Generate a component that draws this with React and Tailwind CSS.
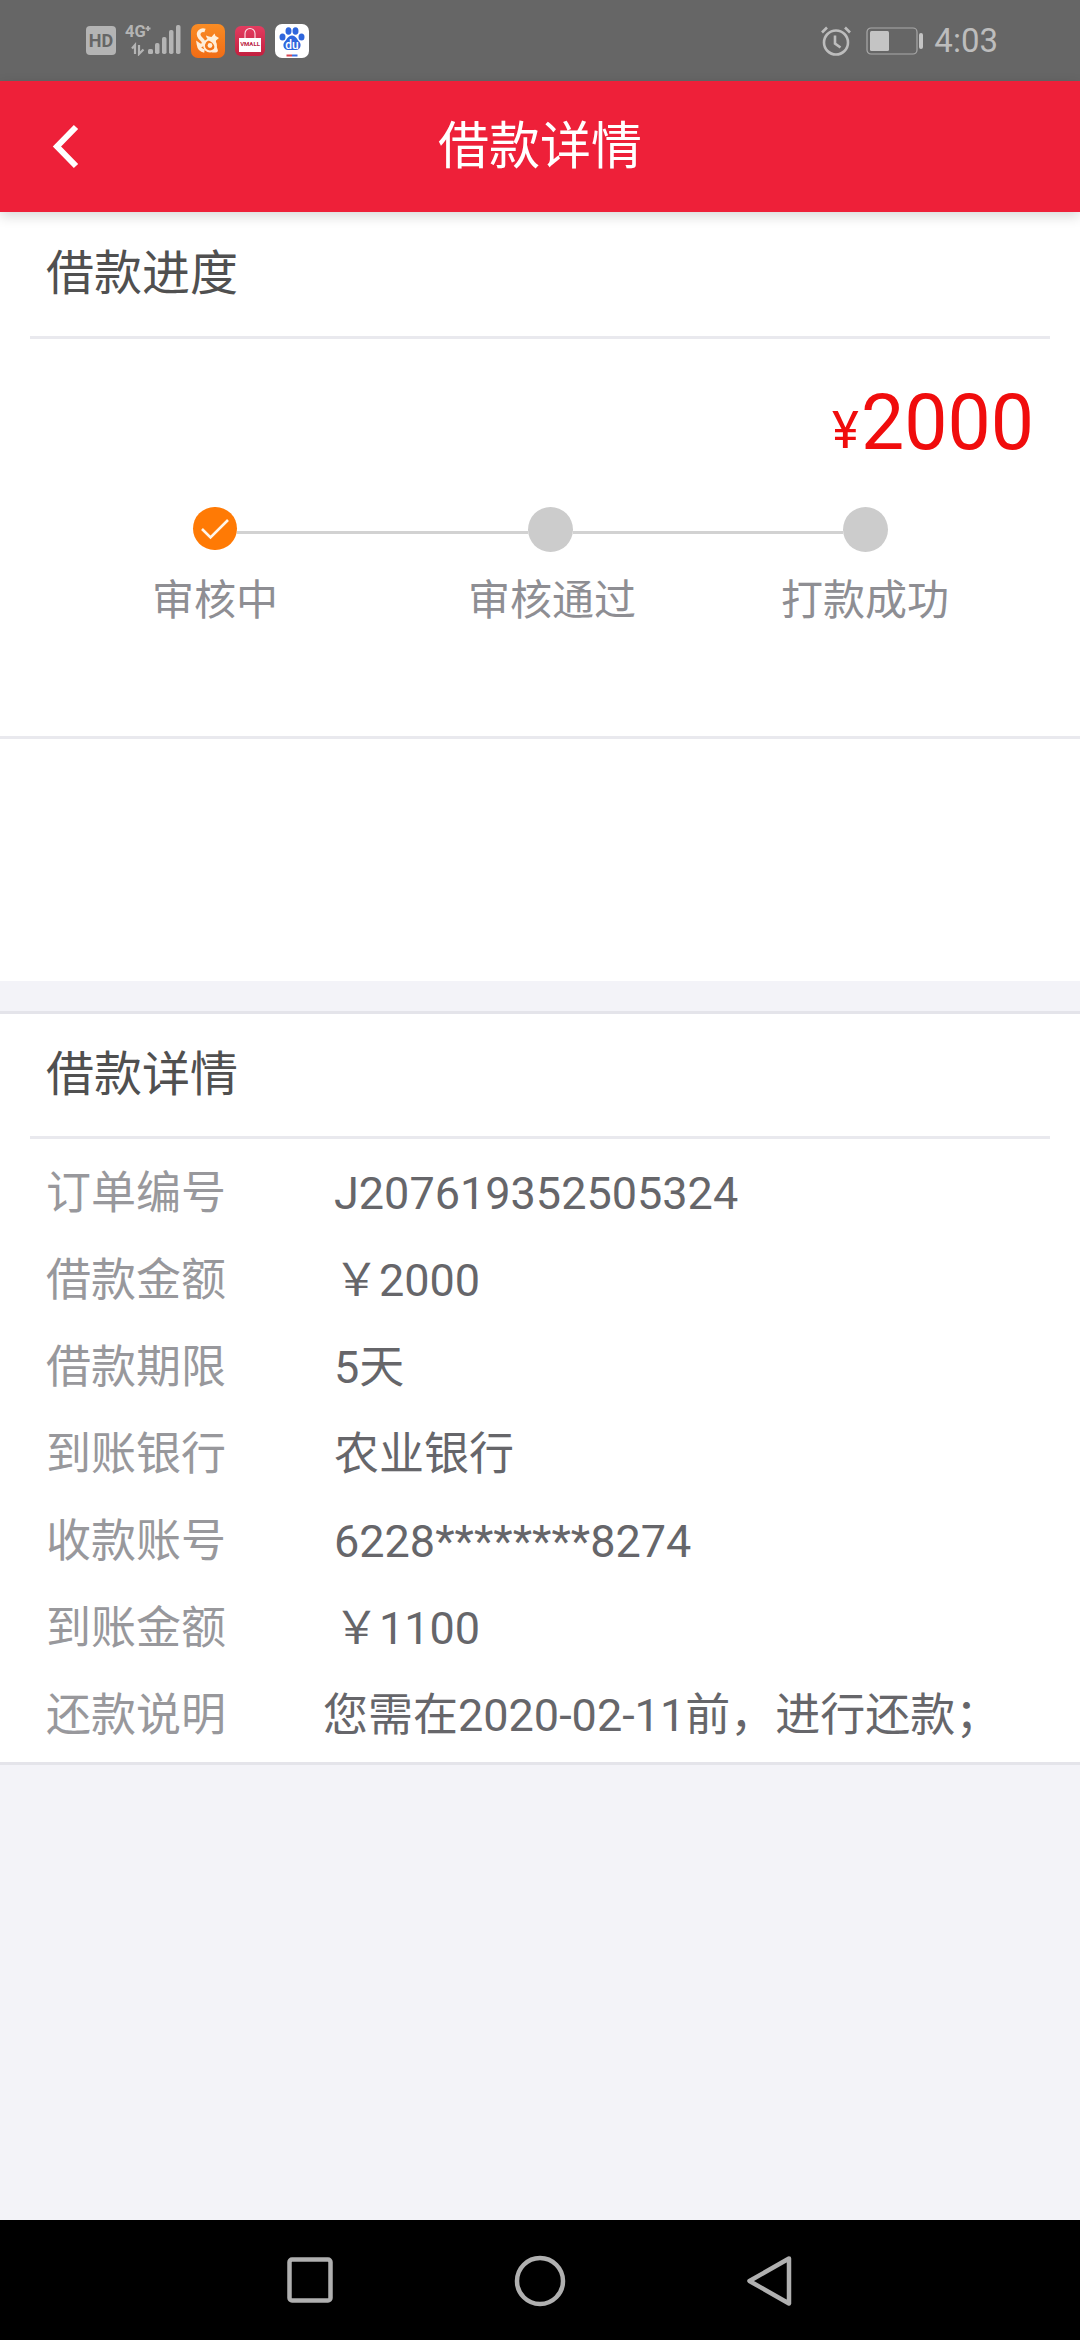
import React from "react";

const FONT = "font-['Roboto','Noto_Sans_CJK_SC',sans-serif]";

function Signal() {
  return (
    <svg width="56" height="36" viewBox="0 -4 56 36" className="mb-[5px] ml-[9px]">
      <text x="0" y="13" fontFamily="Roboto, sans-serif" fontWeight="700" fontSize="16.5" fill="#b4b4b4">4G</text>
      <path d="M20.5 4.5h5M23 2v5" stroke="#b4b4b4" strokeWidth="1.8" />
      <path d="M10 30V21l-3 3.5M14 21v9l4.5-4.5" stroke="#b4b4b4" strokeWidth="2.2" fill="none" />
      <rect x="23" y="25" width="5" height="5" rx="1.5" fill="#b4b4b4" />
      <rect x="30" y="19" width="4.5" height="11" rx="1.8" fill="#b4b4b4" />
      <rect x="37" y="13" width="4.5" height="17" rx="1.8" fill="#b4b4b4" />
      <rect x="44" y="6" width="4.5" height="24" rx="1.8" fill="#b4b4b4" />
      <rect x="51" y="1" width="4.5" height="29" rx="1.8" fill="#b4b4b4" />
    </svg>
  );
}

function UcIcon() {
  return (
    <svg width="34" height="34" viewBox="0 0 34 34" className="ml-[10px]">
      <defs>
        <linearGradient id="uc" x1="0" y1="0" x2="0" y2="1">
          <stop offset="0" stopColor="#f98c24" />
          <stop offset="1" stopColor="#f16c15" />
        </linearGradient>
      </defs>
      <rect width="34" height="34" rx="7" fill="url(#uc)" />
      <path d="M14 6.5c-4-1.500-7.500 2-6 5.500 1.500 3.500 5.500 4.500 4.500 7.500-.7 2-3 2.500-5 1 .5 3.500 3 6 6 6.500" fill="none" stroke="#ffeed9" strokeWidth="3.6" />
      <circle cx="19" cy="21.500" r="6" fill="none" stroke="#ffeed9" strokeWidth="1.800" />
      <circle cx="19" cy="21.500" r="2.400" fill="#ffeed9" />
      <path d="M15 11.500c2 .5 4 1.500 5.500 1.500l3-3.500 1 2.500 3.500 2-3 2.500c-.5 3 .5 6 1.500 8.500 1 2 0 3.500-2 3.500h-4c3.500-2 4-6.500 1-9.500-2-2-5-2.500-6.500-7z" fill="#ffeed9" />
    </svg>
  );
}

function MallIcon() {
  return (
    <svg width="30" height="30" viewBox="0 0 30 30" className="ml-[10px]">
      <defs>
        <linearGradient id="vm" x1="0" y1="0" x2="0" y2="1">
          <stop offset="0" stopColor="#e43c60" />
          <stop offset="1" stopColor="#c2203f" />
        </linearGradient>
      </defs>
      <rect width="30" height="30" rx="6" fill="url(#vm)" />
      <path d="M10 12V7.500a5 5 0 0 1 10 0V12" fill="none" stroke="#fbe3e8" strokeWidth="1.100" />
      <rect x="4" y="12" width="22" height="14" fill="#ffffff" />
      <text x="15" y="19.500" textAnchor="middle" fontFamily="Roboto, sans-serif" fontWeight="700" fontSize="6" fill="#b9233f">VMALL</text>
    </svg>
  );
}

function BaiduIcon() {
  return (
    <svg width="34" height="34" viewBox="0 0 34 34" className="ml-[10px]">
      <rect width="34" height="34" rx="7" fill="#ffffff" />
      <ellipse cx="7.500" cy="13" rx="3" ry="3.500" fill="#2f66dd" />
      <ellipse cx="13.500" cy="7" rx="3" ry="3.800" fill="#2f66dd" />
      <ellipse cx="20.500" cy="7" rx="3" ry="3.800" fill="#2f66dd" />
      <ellipse cx="26.500" cy="13" rx="3" ry="3.500" fill="#2f66dd" />
      <path d="M17 11.500c4 0 5 4 7.500 6.500 2.500 3 .5 8-3.500 8h-8c-4 0-6-5-3.500-8 2.500-2.500 3.500-6.500 7.500-6.500z" fill="#2f66dd" />
      <text x="17" y="24.500" textAnchor="middle" fontFamily="Roboto, sans-serif" fontWeight="500" fontSize="12" fill="#ffffff">du</text>
      <rect x="11.500" y="30.500" width="5.500" height="2" fill="#d8434e" />
      <rect x="17" y="30.500" width="5.500" height="2" fill="#3b6fe0" />
    </svg>
  );
}

function Alarm() {
  return (
    <svg width="32" height="32" viewBox="0 0 32 32">
      <circle cx="16" cy="17.500" r="12" fill="none" stroke="#bdbdbd" strokeWidth="2.600" />
      <path d="M15 10.500v8l5.500 4" fill="none" stroke="#bdbdbd" strokeWidth="2.600" />
      <path d="M2 7.500 7 2.500M30 7.500l-5-5" stroke="#bdbdbd" strokeWidth="2.600" />
    </svg>
  );
}

function Battery() {
  return (
    <svg width="58" height="28" viewBox="0 0 58 28" className="ml-[14px]">
      <rect x="1" y="1" width="50" height="26" rx="4" fill="none" stroke="#a9a9a9" strokeWidth="1.200" />
      <rect x="4" y="4" width="19" height="20" rx="1.500" fill="#c4c4c4" />
      <rect x="53" y="6" width="4" height="16" rx="2" fill="#c4c4c4" />
    </svg>
  );
}

function StatusBar() {
  return (
    <div className="flex h-[81px] shrink-0 items-center bg-[#666666] pl-[86px] pr-[82px]">
      <div className="flex h-[29px] w-[30px] items-center justify-center rounded-[4px] bg-[#b4b4b4]">
        <span className="font-['Roboto',sans-serif] text-[18px] font-bold leading-none text-[#666666]">HD</span>
      </div>
      <Signal />
      <UcIcon />
      <MallIcon />
      <BaiduIcon />
      <div className="flex-1" />
      <Alarm />
      <Battery />
      <span className="ml-[10px] font-['Roboto',sans-serif] text-[33px] leading-none text-[#bdbdbd]">4:03</span>
    </div>
  );
}

function Header() {
  return (
    <div className="relative z-10 flex h-[131px] shrink-0 items-center justify-center bg-[#ee2039] shadow-[0_4px_12px_rgba(0,0,0,0.16)]">
      <svg width="32" height="48" viewBox="0 0 32 48" className="absolute left-[50px] top-[42px]">
        <path d="M26 4 7 23.500 26 43" fill="none" stroke="#ffffff" strokeWidth="6" />
      </svg>
      <h1 className="text-[51px] font-normal leading-none text-white">借款详情</h1>
    </div>
  );
}

function SectionTitle({ children, h }) {
  return (
    <div className={`mx-[30px] flex items-center border-b-[3px] border-[#e9e9ee] pl-[16px] ${h}`}>
      <h2 className="text-[48px] font-normal leading-none text-[#505050]">{children}</h2>
    </div>
  );
}

function Dot({ active }) {
  if (active) {
    return (
      <div className="flex h-[43px] w-[44px] shrink-0 items-center justify-center rounded-full bg-[#ff7a05]">
        <svg width="30" height="22" viewBox="0 0 30 22">
          <path d="M2 11l8.500 8.500L28 2" fill="none" stroke="#fff6ea" strokeWidth="2.600" />
        </svg>
      </div>
    );
  }
  return <div className="h-[45px] w-[45px] shrink-0 rounded-full bg-[#cccccc]" />;
}

function Progress() {
  return (
    <section className="h-[527px] shrink-0 border-b-[3px] border-[#e9e9ee] bg-white">
      <SectionTitle h="h-[127px]">借款进度</SectionTitle>
      <div className="mt-[27px] flex h-[100px] items-center justify-end pr-[46px] pt-[14px] text-[#f00d0d]">
        <span className="mr-[2px] mt-[14px] text-[51px] leading-none">¥</span>
        <span className="text-[77px] leading-none">2000</span>
      </div>
      <div className="mt-[41px] flex items-start pl-[193px]">
        <Dot active />
        <div className="mt-[24px] h-[3px] w-[291px] shrink-0 bg-[#d2d2d2]" />
        <Dot />
        <div className="mt-[24px] h-[3px] w-[270px] shrink-0 bg-[#d2d2d2]" />
        <Dot />
      </div>
      <div className="mt-[24px] flex text-center text-[42px] leading-[50px] text-[#8e8e93]">
        <div className="ml-[115px] w-[200px]">审核中</div>
        <div className="ml-[137px] w-[200px]">审核通过</div>
        <div className="ml-[113px] w-[200px]">打款成功</div>
      </div>
    </section>
  );
}

const rows = [
  ["订单编号", "J207619352505324", "w-[288px]"],
  ["借款金额", "￥2000", "w-[288px]"],
  ["借款期限", "5天", "w-[288px]"],
  ["到账银行", "农业银行", "w-[288px]"],
  ["收款账号", "6228********8274", "w-[288px]"],
  ["到账金额", "￥1100", "w-[288px]"],
  ["还款说明", "您需在2020-02-11前，进行还款；", "w-[277px]"],
];

function Details() {
  return (
    <section className="mt-[30px] shrink-0 border-y-[3px] border-[#e4e4ea] bg-white">
      <SectionTitle h="h-[125px]">借款详情</SectionTitle>
      <div className="pb-[3px] pt-[11px]">
        {rows.map(([label, value, w]) => (
          <div key={label} className="flex h-[87px] items-center pl-[46px] text-[45px] leading-none">
            <span className={`${w} shrink-0 text-[#98989c]`}>{label}</span>
            <span className="whitespace-nowrap text-[#66666a]">{value}</span>
          </div>
        ))}
      </div>
    </section>
  );
}

function NavBar() {
  return (
    <div className="flex h-[120px] shrink-0 items-start bg-black pl-[287px] pt-[35px]">
      <svg width="46" height="50" viewBox="0 0 46 50">
        <rect x="2.500" y="4.500" width="41" height="41" rx="2.500" fill="none" stroke="#b0b0b0" strokeWidth="4.500" />
      </svg>
      <svg width="52" height="52" viewBox="0 0 52 52" className="ml-[181px]">
        <circle cx="26" cy="26" r="23" fill="none" stroke="#b0b0b0" strokeWidth="4.500" />
      </svg>
      <svg width="48" height="52" viewBox="0 0 48 52" className="ml-[180px]">
        <path d="M43 3.500 3.500 26 43 48.500Z" fill="none" stroke="#b0b0b0" strokeWidth="4.500" strokeLinejoin="round" />
      </svg>
    </div>
  );
}

export default function App() {
  return (
    <div className={`flex h-[2340px] w-[1080px] flex-col overflow-hidden bg-[#f3f3f8] ${FONT}`}>
      <StatusBar />
      <Header />
      <Progress />
      <div className="h-[242px] shrink-0 bg-white" />
      <Details />
      <div className="flex-1" />
      <NavBar />
    </div>
  );
}
